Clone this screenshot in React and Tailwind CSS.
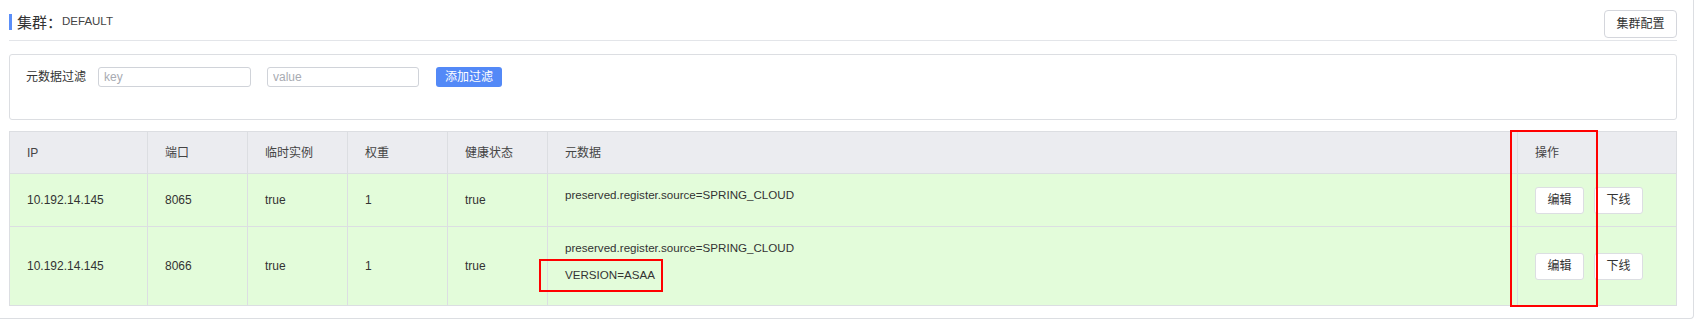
const FONT = {
  fontFamily: '"Liberation Sans", Arial, "Noto Sans CJK SC", sans-serif',
};

const COLUMNS = ["IP", "端口", "临时实例", "权重", "健康状态", "元数据", "操作"];

const instances = [
  {
    ip: "10.192.14.145",
    port: "8065",
    ephemeral: "true",
    weight: "1",
    healthy: "true",
    metadata: ["preserved.register.source=SPRING_CLOUD"],
    height: "h-[53px]",
  },
  {
    ip: "10.192.14.145",
    port: "8066",
    ephemeral: "true",
    weight: "1",
    healthy: "true",
    metadata: ["preserved.register.source=SPRING_CLOUD", "VERSION=ASAA"],
    height: "h-[79px]",
  },
];

function Cell({ children, className = "" }) {
  return (
    <div
      className={`flex items-center border-r border-b border-[#dcdee2] pl-[17px] text-[12px] text-[#333] ${className}`}
    >
      {children}
    </div>
  );
}

function SmallButton({ children }) {
  return (
    <button className="h-[27px] w-[49px] rounded-[3px] border border-[#dcdee2] bg-white text-[12px] text-[#333]">
      {children}
    </button>
  );
}

export default function App() {
  return (
    <div className="relative h-[322px] w-[1700px] overflow-hidden bg-white" style={FONT}>
      <div className="w-[1694px] rounded-br-[4px] border-r border-b border-[#dcdee2] pr-[16px] pb-[12px] pl-[9px]">
        {/* title bar */}
        <div className="flex h-[41px] items-start justify-between border-b border-[#e3e5e9]">
          <div className="mt-[14px] flex h-[16px] items-center">
            <span className="mr-[5px] h-[16px] w-[3px] bg-[#5b8ff9]" />
            <span className="text-[15px] leading-none text-[#333]">集群：</span>
            <span className="text-[11.5px] leading-none text-[#444]">DEFAULT</span>
          </div>
          <button className="mt-[10px] h-[28px] w-[73px] rounded-[4px] border border-[#d4d6dc] bg-white text-[12px] text-[#333]">
            集群配置
          </button>
        </div>

        {/* filter */}
        <div className="mt-[13px] h-[66px] rounded-[3px] border border-[#dcdee2] pt-[12px] pl-[16px]">
          <div className="flex items-center">
            <span className="text-[12px] text-[#333]">元数据过滤</span>
            <input
              placeholder="key"
              className="ml-[12px] h-[20px] w-[153px] rounded-[3px] border border-[#d0d3d9] px-[5px] text-[12px] outline-none placeholder:text-[#a8abb2]"
            />
            <input
              placeholder="value"
              className="ml-[16px] h-[20px] w-[152px] rounded-[3px] border border-[#d0d3d9] px-[5px] text-[12px] outline-none placeholder:text-[#a8abb2]"
            />
            <button className="ml-[17px] h-[20px] w-[66px] rounded-[3px] bg-[#5389f7] text-[12px] text-white">
              添加过滤
            </button>
          </div>
        </div>

        {/* instance table */}
        <div className="mt-[11px] grid grid-cols-[138px_100px_100px_100px_100px_970px_1fr] border-t border-l border-[#dcdee2]">
          {COLUMNS.map((c) => (
            <Cell key={c} className="h-[42px] bg-[#ebecf0] text-[#444]">
              {c}
            </Cell>
          ))}
          {instances.map((row) => (
            <div key={row.port} className="contents">
              <Cell className={`${row.height} bg-[#e3fcda]`}>{row.ip}</Cell>
              <Cell className={`${row.height} bg-[#e3fcda]`}>{row.port}</Cell>
              <Cell className={`${row.height} bg-[#e3fcda]`}>{row.ephemeral}</Cell>
              <Cell className={`${row.height} bg-[#e3fcda]`}>{row.weight}</Cell>
              <Cell className={`${row.height} bg-[#e3fcda]`}>{row.healthy}</Cell>
              <div
                className={`${row.height} flex flex-col gap-[7px] border-r border-b border-[#dcdee2] bg-[#e3fcda] pt-[11px] pl-[17px] text-[11.6px] text-[#333]`}
              >
                {row.metadata.map((m) => (
                  <div key={m} className="h-[20px] leading-[20px]">
                    {m}
                  </div>
                ))}
              </div>
              <Cell className={`${row.height} gap-[10px] bg-[#e3fcda]`}>
                <SmallButton>编辑</SmallButton>
                <SmallButton>下线</SmallButton>
              </Cell>
            </div>
          ))}
        </div>
      </div>

      {/* annotation boxes */}
      <div className="absolute top-[130px] left-[1510px] h-[177px] w-[88px] border-2 border-[#ff0000]" />
      <div className="absolute top-[259px] left-[539px] h-[33px] w-[124px] border-2 border-[#ff0000]" />
    </div>
  );
}
